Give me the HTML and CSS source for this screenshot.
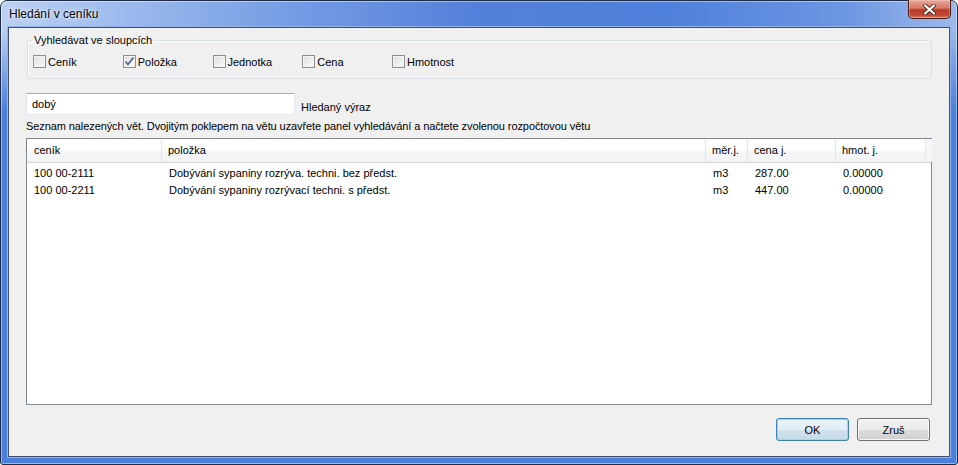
FILE: index.html
```html
<!DOCTYPE html>
<html lang="cs">
<head>
    <meta charset="UTF-8">
    <title>Hledání v ceníku</title>
    <link rel="stylesheet" href="styles.css">
</head>
<body>
    <div class="window">
        <div class="titlebar">
            <span class="title">Hledání v ceníku</span>
            <button class="close" type="button">
                <svg width="17" height="11" viewBox="0 0 17 11">
                    <path d="M4 1.5 L13 9.5 M13 1.5 L4 9.5" stroke="#5a2a24" stroke-width="4" stroke-linecap="round"/>
                    <path d="M4 1.5 L13 9.5 M13 1.5 L4 9.5" stroke="#ffffff" stroke-width="2.2" stroke-linecap="round"/>
                </svg>
            </button>
        </div>

        <div class="client">
            <fieldset class="group">
                <legend>Vyhledávat ve sloupcích</legend>
                <div class="checks">
                    <label class="check"><span class="box"></span>Ceník</label>
                    <label class="check"><span class="box">
                        <svg width="11" height="11" viewBox="0 0 11 11">
                            <path d="M1.5 5.5 L4 8.5 L9.5 1.5" fill="none" stroke="#4a5f86" stroke-width="1.6"/>
                        </svg>
                    </span>Položka</label>
                    <label class="check"><span class="box"></span>Jednotka</label>
                    <label class="check"><span class="box"></span>Cena</label>
                    <label class="check"><span class="box"></span>Hmotnost</label>
                </div>
            </fieldset>

            <div class="search">
                <div class="input">dobý</div>
                <span class="search-label">Hledaný výraz</span>
            </div>

            <p class="info">Seznam nalezených vět. Dvojitým poklepem na větu uzavřete panel vyhledávání a načtete zvolenou rozpočtovou větu</p>

            <div class="list">
                <div class="row head">
                    <div class="cell">ceník</div>
                    <div class="cell">položka</div>
                    <div class="cell">měr.j.</div>
                    <div class="cell">cena j.</div>
                    <div class="cell">hmot. j.</div>
                    <div class="cell filler"></div>
                </div>
                <div class="rows">
                    <div class="row">
                        <div class="cell">100 00-2111</div>
                        <div class="cell">Dobývání sypaniny rozrýva. techni. bez předst.</div>
                        <div class="cell">m3</div>
                        <div class="cell">287.00</div>
                        <div class="cell">0.00000</div>
                    </div>
                    <div class="row">
                        <div class="cell">100 00-2211</div>
                        <div class="cell">Dobývání sypaniny rozrývací techni. s předst.</div>
                        <div class="cell">m3</div>
                        <div class="cell">447.00</div>
                        <div class="cell">0.00000</div>
                    </div>
                </div>
            </div>

            <div class="buttons">
                <button class="btn is-default" type="button">OK</button>
                <button class="btn" type="button">Zruš</button>
            </div>
        </div>
    </div>
</body>
</html>
```

FILE: styles.css
```css
html,
body {
    margin: 0;
    height: 100%;
}

body {
    font-family: "Liberation Sans", Arial, sans-serif;
    font-size: 11px;
    color: #000;
    background: #fff;
}

.window {
    box-sizing: border-box;
    height: 465px;
    width: 958px;
    display: flex;
    flex-direction: column;
    padding: 0 7px 7px 7px;
    border: 1px solid #1d2b44;
    border-radius: 7px 7px 3px 3px;
    box-shadow: inset 0 0 0 1px rgba(255, 255, 255, 0.45);
    background:
        linear-gradient(180deg, rgba(74, 127, 219, 0) 28px, #4a7fdb 110px),
        linear-gradient(90deg, #bcd1f1 0%, #a3bfee 10%, #7aa0e5 28%, #527fd9 50%, #4f80db 70%, #6b96e2 88%, #9db9eb 100%);
}

.titlebar {
    height: 26px;
    display: flex;
    align-items: flex-start;
}

.title {
    font-size: 12px;
    line-height: 14px;
    margin: 6px 0 0 1px;
    text-shadow: 0 0 6px rgba(255, 255, 255, 0.9), 0 0 2px rgba(255, 255, 255, 0.8);
}

.close {
    margin: -1px -1px 0 auto;
    width: 43px;
    height: 19px;
    padding: 0;
    display: flex;
    align-items: center;
    justify-content: center;
    border: 1px solid #4e1c16;
    border-top: none;
    border-radius: 0 0 5px 5px;
    background: linear-gradient(180deg, #e7a99b 0%, #d67663 45%, #b9392a 55%, #c24a36 85%, #d9836c 100%);
    box-shadow: inset 0 0 0 1px rgba(255, 220, 210, 0.35);
}

.client {
    flex: 1;
    display: flex;
    flex-direction: column;
    padding: 6px 17px 15px 17px;
    background: #f0f0f0;
    border: 1px solid #3f4f6c;
    box-shadow: 0 0 0 1px #94b3ea;
}

/* group box */

.group {
    margin: 0 0 0 1px;
    padding: 7px 4px 9px 4px;
    border: 1px solid #d5dfe5;
    border-radius: 3px;
    box-shadow: inset 1px 1px 0 #fff;
}

.group legend {
    padding: 0 2px;
    line-height: 13px;
}

.checks {
    display: flex;
    margin-left: 1px;
}

.check {
    width: 89.75px;
    display: flex;
    align-items: center;
    height: 15px;
}

.box {
    box-sizing: border-box;
    width: 13px;
    height: 13px;
    margin-right: 2px;
    border: 1px solid #8e8f8f;
    background: linear-gradient(135deg, #dcdcdc 0%, #f0f0f0 60%, #fbfbfb 100%);
    box-shadow: inset 0 0 0 1px #f4f4f4;
    display: flex;
    align-items: center;
    justify-content: center;
}

/* search */

.search {
    margin-top: 14px;
    display: flex;
    align-items: flex-end;
}

.input {
    box-sizing: border-box;
    width: 269px;
    height: 22px;
    padding: 4px 5px;
    line-height: 13px;
    background: #fff;
    border: 1px solid #e3e9ef;
    border-top-color: #abadb3;
    border-left-color: #e2e3ea;
}

.search-label {
    margin-left: 6px;
    line-height: 13px;
    margin-bottom: 1px;
}

.info {
    margin: 5px 0 0 0;
    line-height: 13px;
    letter-spacing: -0.09px;
}

/* list */

.list {
    flex: 1;
    margin-top: 5px;
    background: #fff;
    border: 1px solid #828790;
    display: flex;
    flex-direction: column;
}

.row {
    display: grid;
    grid-template-columns: 135px 544px 42px 88px 90px 1fr;
    height: 17px;
    line-height: 17px;
}

.row .cell {
    padding-left: 7px;
    white-space: nowrap;
}

.row.head {
    height: 23px;
    line-height: 23px;
    background: linear-gradient(180deg, #ffffff 0%, #ffffff 45%, #f6f7f9 55%, #f2f3f5 100%);
    border-bottom: 1px solid #d5d5d5;
}

.row.head .cell {
    border-right: 1px solid #e3e5e8;
    padding-left: 6px;
}

.row.head .cell:first-child {
    padding-left: 7px;
}

.row.head .filler {
    border-right: none;
    background: #f4f5f7;
}

.rows {
    padding-top: 2px;
}

/* buttons */

.buttons {
    margin-top: 13px;
    display: flex;
    justify-content: flex-end;
    gap: 8px;
    padding-right: 2px;
}

.btn {
    width: 73px;
    height: 23px;
    padding: 0;
    font-family: inherit;
    font-size: 11px;
    color: #000;
    border: 1px solid #707070;
    border-radius: 3px;
    background: linear-gradient(180deg, #f2f2f2 0%, #ebebeb 50%, #dddddd 51%, #cfcfcf 100%);
    box-shadow: inset 0 0 0 1px rgba(255, 255, 255, 0.8);
}

.btn.is-default {
    border-color: #3c7fb1;
    background: linear-gradient(180deg, #eaf3f8 0%, #e2eef5 50%, #d1e2ec 51%, #c4d9e6 100%);
    box-shadow: inset 0 0 0 1px #8fdcf8;
}
```
